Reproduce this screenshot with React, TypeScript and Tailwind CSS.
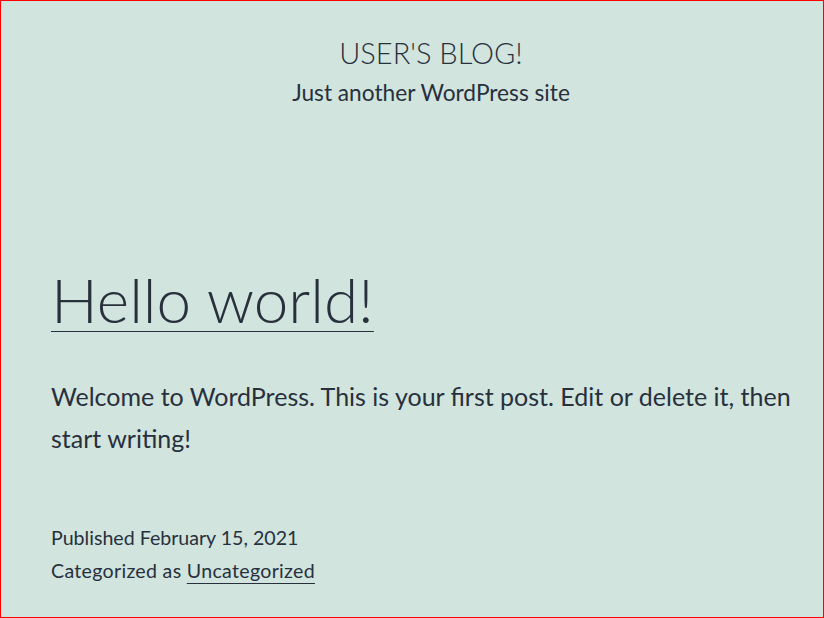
export default function App() {
  return (
    <div
      className="h-[618px] w-full overflow-hidden border border-[#ff0000] bg-[#d1e4dd] text-[#28303d]"
      style={{ fontFamily: "Lato, 'Noto Sans', sans-serif" }}
    >
      {/* header */}
      <header className="flex flex-col items-center pl-[38px] pt-[34px]">
        <p className="text-[29px] font-light leading-[36px]">USER'S BLOG!</p>
        <p className="mt-[8px] text-[22.7px] leading-[28px]">Just another WordPress site</p>
      </header>

      <main className="pl-[50px] pr-[20px] pt-[156px]">
        <h1 className="text-[62px] font-light leading-[72px]">
          <a href="#" className="underline decoration-1 underline-offset-[8px]">
            Hello world!
          </a>
        </h1>

        <p className="mt-[40px] text-[25px] leading-[42px]">
          Welcome to WordPress. This is your first post. Edit or delete it, then start writing!
        </p>

        <div className="mt-[62px] text-[19.6px] leading-[33px]">
          <p>Published February 15, 2021</p>
          <p className="tracking-[0.3px]">
            Categorized as{" "}
            <a href="#" className="underline decoration-1 underline-offset-[5px]">
              Uncategorized
            </a>
          </p>
        </div>
      </main>
    </div>
  );
}
